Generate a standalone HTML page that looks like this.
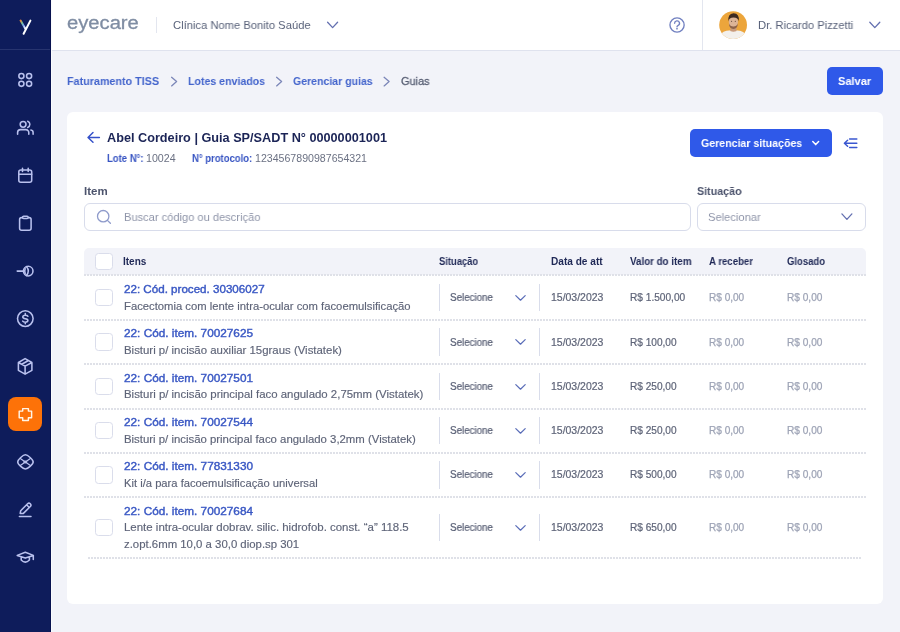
<!DOCTYPE html>
<html><head><meta charset="utf-8">
<style>
*{margin:0;padding:0;box-sizing:border-box}
html,body{width:900px;height:632px;overflow:hidden;background:#F2F3F9;font-family:"Liberation Sans",sans-serif}
.t{position:absolute;white-space:nowrap;line-height:1;transform-origin:0 0;will-change:transform}
svg{position:absolute;overflow:visible}
.box{position:absolute}
.dot{position:absolute;left:87px;width:776px;height:2px;background-image:linear-gradient(to right,#DFE1E8 0,#DFE1E8 2px,transparent 2px);background-size:3px 2px}
.cb{position:absolute;width:17.4px;height:17.4px;border:1px solid #DADDEB;border-radius:3.5px;background:#fff}
.vl{position:absolute;width:1px;height:27.4px;background:#D9DDEB}
</style></head><body>
<!-- sidebar -->
<div class="box" style="left:0;top:0;width:50px;height:632px;background:#0E1C5B"></div>
<div class="box" style="left:50px;top:0;width:1px;height:632px;background:#07114E"></div>
<div class="box" style="left:51px;top:0;width:1px;height:632px;background:#FAFBFD"></div>
<div class="box" style="left:0;top:49px;width:50px;height:1px;background:#27346F"></div>
<div class="box" style="left:8.2px;top:397.2px;width:34px;height:34px;background:#FD7208;border-radius:8px"></div>
<svg width="50" height="632" style="left:0;top:0" viewBox="0 0 50 632">
 <defs><linearGradient id="lg" x1="0" y1="0" x2="1" y2="1"><stop offset="0" stop-color="#E8843A"/><stop offset="0.35" stop-color="#6FC7A0"/><stop offset="0.6" stop-color="#7FA0F0"/><stop offset="1" stop-color="#FFFFFF"/></linearGradient></defs>
 <path d="M20.6 20.6 L25.2 28.6" stroke="url(#lg)" stroke-width="2" stroke-linecap="round" fill="none"/>
 <path d="M30.4 20.6 L23.6 33.8" stroke="#FFFFFF" stroke-width="2" stroke-linecap="round" fill="none"/>
 <g fill="none" stroke="#B9C1EE" stroke-width="1.55" stroke-linecap="round" stroke-linejoin="round">
  <circle cx="21.4" cy="76.1" r="2.55"/><circle cx="29.1" cy="76.1" r="2.55"/><circle cx="21.4" cy="83.8" r="2.55"/><circle cx="29.1" cy="83.8" r="2.55"/>
  <circle cx="23.1" cy="124.3" r="2.9"/>
  <path d="M27.7 121.2 A3.3 3.3 0 0 1 27.7 127.4"/>
  <path d="M17.6 134.3 V132.6 A3 3 0 0 1 20.6 129.6 H25.8 A3 3 0 0 1 28.8 132.6 V134.3"/>
  <path d="M30.9 130 A2.6 2.6 0 0 1 33.1 132.6 V134.3"/>
  <rect x="18.8" y="170" width="12.9" height="12.3" rx="2"/>
  <path d="M18.8 174.2 H31.7 M22.5 168.2 V171.4 M28.2 168.2 V171.4"/>
  <rect x="19.6" y="217.6" width="11.5" height="12.7" rx="2"/>
  <rect x="22.6" y="216.3" width="5.5" height="2.2" rx="1" fill="#0E1C5B"/>
  <circle cx="28.2" cy="271.1" r="4.8"/>
  <path d="M17.2 271.1 H23.4 M26.4 266.6 Q30.2 271.1 26.4 275.6 M25.2 268.6 Q24.2 271.1 25.2 273.6"/>
  <circle cx="25.3" cy="318.6" r="7.8"/>
  <path d="M27.9 316.3 C27.5 315.6 26.6 315.3 25.3 315.3 C23.7 315.3 22.8 316.1 22.8 317.1 C22.8 318.3 24 318.6 25.3 318.8 C26.8 319 27.9 319.4 27.9 320.6 C27.9 321.6 26.9 322.2 25.3 322.2 C24 322.2 23.1 321.8 22.7 321.1 M25.3 313.5 V315.3 M25.3 322.2 V323.8"/>
  <path d="M25.1 358.6 L31.9 362.5 V370.3 L25.1 374.2 L18.4 370.3 V362.5 Z M18.4 362.5 L25.1 366.1 L31.9 362.5 M25.1 366.1 V374.2 M21.7 364.3 L28.5 360.5"/>
  <path d="M25.4 454.8 C27.6 454.8 33.2 459.6 33.2 461.9 C33.2 464.2 27.6 469 25.4 469 C23.2 469 17.7 464.2 17.7 461.9 C17.7 459.6 23.2 454.8 25.4 454.8 Z"/>
  <path d="M20.3 458.5 L30.4 465.5 M30.4 458.5 L20.3 465.5" stroke-width="1.2"/>
  <ellipse cx="25.3" cy="462" rx="1.5" ry="0.9" stroke-width="1.1"/>
  <path d="M20.2 513.5 L20.7 510.7 L27.6 503.8 A1.9 1.9 0 0 1 30.3 506.5 L23.4 513.4 Z M26.6 504.8 L29.3 507.5"/>
  <path d="M19.4 516.5 H31"/>
  <path d="M17.2 555.4 L25.3 552.3 L33.4 555.4 L25.3 558.1 Z M21.2 556.8 V560 Q25.3 564.2 29.4 560 V556.8 M33.3 555.6 V559.4"/>
 </g>
 <path d="M22.7 408.6 H28.4 V411.1 H31.6 V417.8 H28.4 V420.4 H22.7 V417.8 H19.2 V411.1 H22.7 Z" fill="none" stroke="#FFF4E6" stroke-width="1.45" stroke-linejoin="round"/>
</svg>
<!-- header -->
<div class="box" style="left:52px;top:0;width:848px;height:50px;background:#FFFFFF"></div>
<div class="box" style="left:52px;top:50px;width:848px;height:1px;background:#DFE2EE"></div>
<div class="box" style="left:156px;top:17px;width:1px;height:16px;background:#E3E6EF"></div>
<div class="box" style="left:702px;top:0;width:1px;height:50px;background:#E3E6EF"></div>
<svg width="900" height="60" style="left:0;top:0" viewBox="0 0 900 60">
 <path d="M327.6 22.3 L332.6 27.6 L337.6 22.3" fill="none" stroke="#6470B0" stroke-width="1.3" stroke-linecap="round" stroke-linejoin="round"/>
 <path d="M869.8 22.3 L874.8 27.6 L879.8 22.3" fill="none" stroke="#6470B0" stroke-width="1.3" stroke-linecap="round" stroke-linejoin="round"/>
 <g fill="none" stroke="#7180C0" stroke-width="1.35" stroke-linecap="round">
  <circle cx="677.05" cy="24.95" r="7.1"/>
  <path d="M674.6 23.2 A2.45 2.35 0 1 1 678.2 25.3 Q677 25.9 677 26.8"/>
 </g>
 <circle cx="677" cy="28.7" r="0.85" fill="#7180C0"/>
 <defs><clipPath id="av"><circle cx="733.1" cy="25.05" r="13.9"/></clipPath></defs>
 <g clip-path="url(#av)">
  <rect x="718" y="10" width="30" height="30" fill="#ECA53B"/>
  <path d="M719 40 Q719.5 32.5 726.5 30.8 L733.3 30 L740 30.8 Q747 32.5 747.5 40 Z" fill="#F3F0EC"/>
  <path d="M730.6 26.5 L736.2 26.5 L736.6 31 Q733.4 32.6 730.2 31 Z" fill="#C99A7B"/>
  <ellipse cx="733.4" cy="21.9" rx="4.6" ry="6" fill="#DDB497"/>
  <path d="M728.3 21.5 Q727.6 13.6 733.5 13.2 Q739.8 13.4 738.8 21.5 Q738.3 17.6 733.5 17.5 Q729 17.6 728.3 21.5 Z" fill="#3E2A20"/>
  <path d="M728.9 23.2 Q729.2 28.7 733.4 28.9 Q737.6 28.7 737.9 23.2 Q736.6 26.6 733.4 26.5 Q730.2 26.6 728.9 23.2 Z" fill="#8D634A"/>
  <circle cx="731.6" cy="21.3" r="0.55" fill="#4A3428"/><circle cx="735.3" cy="21.3" r="0.55" fill="#4A3428"/>
 </g>
</svg>
<!-- breadcrumb chevrons -->
<svg width="900" height="100" style="left:0;top:0" viewBox="0 0 900 100">
 <g fill="none" stroke="#7B86B8" stroke-width="1.3" stroke-linecap="round" stroke-linejoin="round">
  <path d="M171.6 77.3 L176.6 81.6 L171.6 85.9"/>
  <path d="M276.6 77.3 L281.6 81.6 L276.6 85.9"/>
  <path d="M384.1 77.3 L389.1 81.6 L384.1 85.9"/>
 </g>
</svg>
<div class="box" style="left:827px;top:67.4px;width:56px;height:28px;background:#2F59E9;border-radius:5px"></div>
<!-- card -->
<div class="box" style="left:67.4px;top:112.3px;width:815.6px;height:491.9px;background:#FFFFFF;border-radius:6px"></div>
<div class="box" style="left:690px;top:129.3px;width:142.2px;height:27.5px;background:#2F59E9;border-radius:5px"></div>
<div class="box" style="left:84.2px;top:203px;width:607px;height:28px;border:1px solid #D8DCEB;border-radius:6px;background:#fff"></div>
<div class="box" style="left:697.3px;top:203px;width:168.7px;height:28px;border:1px solid #D8DCEB;border-radius:6px;background:#fff"></div>
<svg width="900" height="240" style="left:0;top:0" viewBox="0 0 900 240">
 <path d="M93 132.6 L88 137.4 L93 142.2 M88.2 137.4 H99.4" fill="none" stroke="#3551C9" stroke-width="1.45" stroke-linecap="round" stroke-linejoin="round"/>
 <path d="M849.6 139 H856.8 M844.6 143.2 H856.8 M849.6 147.4 H856.8 M847.6 140.2 L844.4 143.2 L847.6 146.3" fill="none" stroke="#3A57D0" stroke-width="1.5" stroke-linecap="round" stroke-linejoin="round"/>
 <path d="M812.8 141.5 L815.7 144.6 L818.6 141.5" fill="none" stroke="#FFFFFF" stroke-width="1.5" stroke-linecap="round" stroke-linejoin="round"/>
 <g fill="none" stroke="#8F9BCB" stroke-width="1.3" stroke-linecap="round">
  <circle cx="103.2" cy="216.2" r="5.7"/>
  <path d="M107.4 220.4 L110.4 223.3"/>
 </g>
 <path d="M841.9 213.9 L846.9 219.4 L851.9 213.9" fill="none" stroke="#6470B0" stroke-width="1.3" stroke-linecap="round" stroke-linejoin="round"/>
</svg>
<!-- table header -->
<div class="box" style="left:83.8px;top:248px;width:782.2px;height:27.4px;background:#F2F3F9;border-radius:5px 5px 0 0"></div>
<div class="dot" style="top:274px;left:84px;width:782px"></div>
<div class="cb" style="left:95.3px;top:253px"></div>

<div class="dot" style="top:319px;left:84px;width:783px"></div><div class="cb" style="left:95.3px;top:288.95px"></div><div class="vl" style="left:439px;top:283.95px"></div><div class="vl" style="left:539px;top:283.95px"></div><svg width="11" height="6" style="left:514.8px;top:294.75px" viewBox="0 0 11 6"><path d="M0.8 0.6 L5.5 5.2 L10.2 0.6" fill="none" stroke="#5A6DB8" stroke-width="1.2" stroke-linecap="round" stroke-linejoin="round"/></svg><div class="dot" style="top:363px;left:84px;width:783px"></div><div class="cb" style="left:95.3px;top:333.30px"></div><div class="vl" style="left:439px;top:328.30px"></div><div class="vl" style="left:539px;top:328.30px"></div><svg width="11" height="6" style="left:514.8px;top:339.10px" viewBox="0 0 11 6"><path d="M0.8 0.6 L5.5 5.2 L10.2 0.6" fill="none" stroke="#5A6DB8" stroke-width="1.2" stroke-linecap="round" stroke-linejoin="round"/></svg><div class="dot" style="top:408px;left:84px;width:783px"></div><div class="cb" style="left:95.3px;top:377.70px"></div><div class="vl" style="left:439px;top:372.70px"></div><div class="vl" style="left:539px;top:372.70px"></div><svg width="11" height="6" style="left:514.8px;top:383.50px" viewBox="0 0 11 6"><path d="M0.8 0.6 L5.5 5.2 L10.2 0.6" fill="none" stroke="#5A6DB8" stroke-width="1.2" stroke-linecap="round" stroke-linejoin="round"/></svg><div class="dot" style="top:452px;left:84px;width:783px"></div><div class="cb" style="left:95.3px;top:422.05px"></div><div class="vl" style="left:439px;top:417.05px"></div><div class="vl" style="left:539px;top:417.05px"></div><svg width="11" height="6" style="left:514.8px;top:427.85px" viewBox="0 0 11 6"><path d="M0.8 0.6 L5.5 5.2 L10.2 0.6" fill="none" stroke="#5A6DB8" stroke-width="1.2" stroke-linecap="round" stroke-linejoin="round"/></svg><div class="dot" style="top:496px;left:84px;width:783px"></div><div class="cb" style="left:95.3px;top:466.30px"></div><div class="vl" style="left:439px;top:461.30px"></div><div class="vl" style="left:539px;top:461.30px"></div><svg width="11" height="6" style="left:514.8px;top:472.10px" viewBox="0 0 11 6"><path d="M0.8 0.6 L5.5 5.2 L10.2 0.6" fill="none" stroke="#5A6DB8" stroke-width="1.2" stroke-linecap="round" stroke-linejoin="round"/></svg><div class="dot" style="top:557px;left:88px;width:774px"></div><div class="cb" style="left:95.3px;top:518.70px"></div><div class="vl" style="left:439px;top:513.70px"></div><div class="vl" style="left:539px;top:513.70px"></div><svg width="11" height="6" style="left:514.8px;top:524.50px" viewBox="0 0 11 6"><path d="M0.8 0.6 L5.5 5.2 L10.2 0.6" fill="none" stroke="#5A6DB8" stroke-width="1.2" stroke-linecap="round" stroke-linejoin="round"/></svg>
<div class="t" style="left:67.10px;top:15.00px;font-size:17.6px;font-weight:400;color:#7F8DA3;transform:scaleX(1.1471);-webkit-text-stroke:0.3px #7F8DA3;">eyecare</div>
<div class="t" style="left:173.30px;top:20.00px;font-size:11.3px;font-weight:400;color:#59627A;transform:scaleX(0.9915);">Clínica Nome Bonito Saúde</div>
<div class="t" style="left:758.40px;top:20.00px;font-size:11.3px;font-weight:400;color:#59627A;transform:scaleX(0.9921);">Dr. Ricardo Pizzetti</div>
<div class="t" style="left:67.30px;top:76.00px;font-size:11.5px;font-weight:700;color:#4364CC;transform:scaleX(0.9359);">Faturamento TISS</div>
<div class="t" style="left:187.60px;top:76.00px;font-size:11.5px;font-weight:700;color:#4364CC;transform:scaleX(0.9209);">Lotes enviados</div>
<div class="t" style="left:292.70px;top:76.00px;font-size:11.5px;font-weight:700;color:#4364CC;transform:scaleX(0.9156);">Gerenciar guias</div>
<div class="t" style="left:400.50px;top:76.00px;font-size:11.5px;font-weight:400;color:#575E73;transform:scaleX(0.9518);-webkit-text-stroke:0.3px #575E73;">Guias</div>
<div class="t" style="left:837.80px;top:76.00px;font-size:11.5px;font-weight:700;color:#FFFFFF;transform:scaleX(0.9586);">Salvar</div>
<div class="t" style="left:106.80px;top:132.00px;font-size:12.5px;font-weight:700;color:#1B2456;transform:scaleX(1.0146);">Abel Cordeiro | Guia SP/SADT N° 00000001001</div>
<div class="t" style="left:106.80px;top:154.00px;font-size:10px;font-weight:700;color:#3653C2;transform:scaleX(0.9522);">Lote N°:</div>
<div class="t" style="left:145.50px;top:154.00px;font-size:10px;font-weight:400;color:#6B7183;transform:scaleX(1.0643);">10024</div>
<div class="t" style="left:192.20px;top:154.00px;font-size:10px;font-weight:700;color:#3653C2;transform:scaleX(0.9490);">N° protocolo:</div>
<div class="t" style="left:254.80px;top:154.00px;font-size:10px;font-weight:400;color:#6B7183;transform:scaleX(1.0599);">1234567890987654321</div>
<div class="t" style="left:701.10px;top:138.00px;font-size:11.5px;font-weight:700;color:#FFFFFF;transform:scaleX(0.9204);">Gerenciar situações</div>
<div class="t" style="left:84.20px;top:186.00px;font-size:11.5px;font-weight:700;color:#4D546D;transform:scaleX(0.9807);">Item</div>
<div class="t" style="left:697.30px;top:186.00px;font-size:11.5px;font-weight:700;color:#4D546D;transform:scaleX(0.9304);">Situação</div>
<div class="t" style="left:123.50px;top:212.00px;font-size:11.5px;font-weight:400;color:#9096AA;transform:scaleX(0.9655);">Buscar código ou descrição</div>
<div class="t" style="left:708.40px;top:212.00px;font-size:11.5px;font-weight:400;color:#9096AA;transform:scaleX(0.9716);">Selecionar</div>
<div class="t" style="left:123.40px;top:257.00px;font-size:10px;font-weight:700;color:#1F2856;transform:scaleX(0.9896);">Itens</div>
<div class="t" style="left:438.50px;top:257.00px;font-size:10px;font-weight:700;color:#1F2856;transform:scaleX(0.9379);">Situação</div>
<div class="t" style="left:551.10px;top:257.00px;font-size:10px;font-weight:700;color:#1F2856;transform:scaleX(1.0093);">Data de att</div>
<div class="t" style="left:629.80px;top:257.00px;font-size:10px;font-weight:700;color:#1F2856;transform:scaleX(0.9778);">Valor do item</div>
<div class="t" style="left:708.50px;top:257.00px;font-size:10px;font-weight:700;color:#1F2856;transform:scaleX(0.9611);">A receber</div>
<div class="t" style="left:787.10px;top:257.00px;font-size:10px;font-weight:700;color:#1F2856;transform:scaleX(0.9496);">Glosado</div>
<div class="t" style="left:123.50px;top:284.00px;font-size:11px;font-weight:400;color:#3A58C4;transform:scaleX(1.0545);-webkit-text-stroke:0.4px #3A58C4;">22: Cód. proced. 30306027</div>
<div class="t" style="left:123.50px;top:301.00px;font-size:11px;font-weight:400;color:#5E6478;transform:scaleX(1.0235);-webkit-text-stroke:0.15px #5E6478;">Facectomia com lente intra-ocular com facoemulsificação</div>
<div class="t" style="left:450.20px;top:293.00px;font-size:10px;font-weight:400;color:#565D73;transform:scaleX(0.9790);-webkit-text-stroke:0.2px #565D73;">Selecione</div>
<div class="t" style="left:551.30px;top:293.00px;font-size:10px;font-weight:400;color:#5E6478;transform:scaleX(1.0467);-webkit-text-stroke:0.2px #5E6478;">15/03/2023</div>
<div class="t" style="left:629.90px;top:293.00px;font-size:10px;font-weight:400;color:#5E6478;transform:scaleX(1.0128);-webkit-text-stroke:0.2px #5E6478;">R$ 1.500,00</div>
<div class="t" style="left:708.50px;top:293.00px;font-size:10px;font-weight:400;color:#9EA4B6;transform:scaleX(1.0048);-webkit-text-stroke:0.25px #9EA4B6;">R$ 0,00</div>
<div class="t" style="left:787.10px;top:293.00px;font-size:10px;font-weight:400;color:#9EA4B6;transform:scaleX(1.0105);-webkit-text-stroke:0.25px #9EA4B6;">R$ 0,00</div>
<div class="t" style="left:123.50px;top:328.00px;font-size:11px;font-weight:400;color:#3A58C4;transform:scaleX(1.0707);-webkit-text-stroke:0.4px #3A58C4;">22: Cód. item. 70027625</div>
<div class="t" style="left:123.50px;top:345.00px;font-size:11px;font-weight:400;color:#5E6478;transform:scaleX(1.0370);-webkit-text-stroke:0.15px #5E6478;">Bisturi p/ incisão auxiliar 15graus (Vistatek)</div>
<div class="t" style="left:450.20px;top:338.00px;font-size:10px;font-weight:400;color:#565D73;transform:scaleX(0.9790);-webkit-text-stroke:0.2px #565D73;">Selecione</div>
<div class="t" style="left:551.30px;top:338.00px;font-size:10px;font-weight:400;color:#5E6478;transform:scaleX(1.0467);-webkit-text-stroke:0.2px #5E6478;">15/03/2023</div>
<div class="t" style="left:629.90px;top:338.00px;font-size:10px;font-weight:400;color:#5E6478;transform:scaleX(1.0096);-webkit-text-stroke:0.2px #5E6478;">R$ 100,00</div>
<div class="t" style="left:708.50px;top:338.00px;font-size:10px;font-weight:400;color:#9EA4B6;transform:scaleX(1.0048);-webkit-text-stroke:0.25px #9EA4B6;">R$ 0,00</div>
<div class="t" style="left:787.10px;top:338.00px;font-size:10px;font-weight:400;color:#9EA4B6;transform:scaleX(1.0105);-webkit-text-stroke:0.25px #9EA4B6;">R$ 0,00</div>
<div class="t" style="left:123.50px;top:373.00px;font-size:11px;font-weight:400;color:#3A58C4;transform:scaleX(1.0707);-webkit-text-stroke:0.4px #3A58C4;">22: Cód. item. 70027501</div>
<div class="t" style="left:123.50px;top:389.00px;font-size:11px;font-weight:400;color:#5E6478;transform:scaleX(1.0378);-webkit-text-stroke:0.15px #5E6478;">Bisturi p/ incisão principal faco angulado 2,75mm (Vistatek)</div>
<div class="t" style="left:450.20px;top:382.00px;font-size:10px;font-weight:400;color:#565D73;transform:scaleX(0.9790);-webkit-text-stroke:0.2px #565D73;">Selecione</div>
<div class="t" style="left:551.30px;top:382.00px;font-size:10px;font-weight:400;color:#5E6478;transform:scaleX(1.0467);-webkit-text-stroke:0.2px #5E6478;">15/03/2023</div>
<div class="t" style="left:629.90px;top:382.00px;font-size:10px;font-weight:400;color:#5E6478;transform:scaleX(1.0096);-webkit-text-stroke:0.2px #5E6478;">R$ 250,00</div>
<div class="t" style="left:708.50px;top:382.00px;font-size:10px;font-weight:400;color:#9EA4B6;transform:scaleX(1.0048);-webkit-text-stroke:0.25px #9EA4B6;">R$ 0,00</div>
<div class="t" style="left:787.10px;top:382.00px;font-size:10px;font-weight:400;color:#9EA4B6;transform:scaleX(1.0105);-webkit-text-stroke:0.25px #9EA4B6;">R$ 0,00</div>
<div class="t" style="left:123.50px;top:417.00px;font-size:11px;font-weight:400;color:#3A58C4;transform:scaleX(1.0707);-webkit-text-stroke:0.4px #3A58C4;">22: Cód. item. 70027544</div>
<div class="t" style="left:123.50px;top:434.00px;font-size:11px;font-weight:400;color:#5E6478;transform:scaleX(1.0337);-webkit-text-stroke:0.15px #5E6478;">Bisturi p/ incisão principal faco angulado 3,2mm (Vistatek)</div>
<div class="t" style="left:450.20px;top:426.00px;font-size:10px;font-weight:400;color:#565D73;transform:scaleX(0.9790);-webkit-text-stroke:0.2px #565D73;">Selecione</div>
<div class="t" style="left:551.30px;top:426.00px;font-size:10px;font-weight:400;color:#5E6478;transform:scaleX(1.0467);-webkit-text-stroke:0.2px #5E6478;">15/03/2023</div>
<div class="t" style="left:629.90px;top:426.00px;font-size:10px;font-weight:400;color:#5E6478;transform:scaleX(1.0096);-webkit-text-stroke:0.2px #5E6478;">R$ 250,00</div>
<div class="t" style="left:708.50px;top:426.00px;font-size:10px;font-weight:400;color:#9EA4B6;transform:scaleX(1.0048);-webkit-text-stroke:0.25px #9EA4B6;">R$ 0,00</div>
<div class="t" style="left:787.10px;top:426.00px;font-size:10px;font-weight:400;color:#9EA4B6;transform:scaleX(1.0105);-webkit-text-stroke:0.25px #9EA4B6;">R$ 0,00</div>
<div class="t" style="left:123.50px;top:461.00px;font-size:11px;font-weight:400;color:#3A58C4;transform:scaleX(1.0707);-webkit-text-stroke:0.4px #3A58C4;">22: Cód. item. 77831330</div>
<div class="t" style="left:123.50px;top:478.00px;font-size:11px;font-weight:400;color:#5E6478;transform:scaleX(1.0186);-webkit-text-stroke:0.15px #5E6478;">Kit i/a para facoemulsificação universal</div>
<div class="t" style="left:450.20px;top:470.00px;font-size:10px;font-weight:400;color:#565D73;transform:scaleX(0.9790);-webkit-text-stroke:0.2px #565D73;">Selecione</div>
<div class="t" style="left:551.30px;top:470.00px;font-size:10px;font-weight:400;color:#5E6478;transform:scaleX(1.0467);-webkit-text-stroke:0.2px #5E6478;">15/03/2023</div>
<div class="t" style="left:629.90px;top:470.00px;font-size:10px;font-weight:400;color:#5E6478;transform:scaleX(1.0096);-webkit-text-stroke:0.2px #5E6478;">R$ 500,00</div>
<div class="t" style="left:708.50px;top:470.00px;font-size:10px;font-weight:400;color:#9EA4B6;transform:scaleX(1.0048);-webkit-text-stroke:0.25px #9EA4B6;">R$ 0,00</div>
<div class="t" style="left:787.10px;top:470.00px;font-size:10px;font-weight:400;color:#9EA4B6;transform:scaleX(1.0105);-webkit-text-stroke:0.25px #9EA4B6;">R$ 0,00</div>
<div class="t" style="left:123.50px;top:506.00px;font-size:11px;font-weight:400;color:#3A58C4;transform:scaleX(1.0707);-webkit-text-stroke:0.4px #3A58C4;">22: Cód. item. 70027684</div>
<div class="t" style="left:123.50px;top:522.00px;font-size:11px;font-weight:400;color:#5E6478;transform:scaleX(1.0409);-webkit-text-stroke:0.15px #5E6478;">Lente intra-ocular dobrav. silic. hidrofob. const. “a” 118.5</div>
<div class="t" style="left:123.50px;top:539.00px;font-size:11px;font-weight:400;color:#5E6478;transform:scaleX(1.0343);-webkit-text-stroke:0.15px #5E6478;">z.opt.6mm 10,0 a 30,0 diop.sp 301</div>
<div class="t" style="left:450.20px;top:523.00px;font-size:10px;font-weight:400;color:#565D73;transform:scaleX(0.9790);-webkit-text-stroke:0.2px #565D73;">Selecione</div>
<div class="t" style="left:551.30px;top:523.00px;font-size:10px;font-weight:400;color:#5E6478;transform:scaleX(1.0467);-webkit-text-stroke:0.2px #5E6478;">15/03/2023</div>
<div class="t" style="left:629.90px;top:523.00px;font-size:10px;font-weight:400;color:#5E6478;transform:scaleX(1.0096);-webkit-text-stroke:0.2px #5E6478;">R$ 650,00</div>
<div class="t" style="left:708.50px;top:523.00px;font-size:10px;font-weight:400;color:#9EA4B6;transform:scaleX(1.0048);-webkit-text-stroke:0.25px #9EA4B6;">R$ 0,00</div>
<div class="t" style="left:787.10px;top:523.00px;font-size:10px;font-weight:400;color:#9EA4B6;transform:scaleX(1.0105);-webkit-text-stroke:0.25px #9EA4B6;">R$ 0,00</div>
</body></html>
